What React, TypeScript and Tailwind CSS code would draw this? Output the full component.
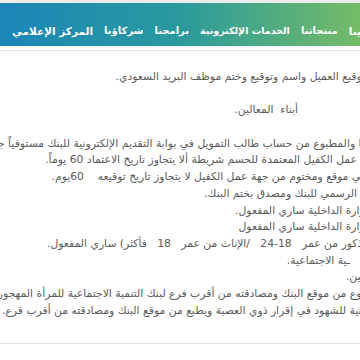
import React from "react";

type Nav = { t: string; c: string };

const navItems: Nav[] = [
  { t: "المركز الإعلامي", c: "text-[10.5px]" },
  { t: "شركاؤنا", c: "text-[10px]" },
  { t: "برامجنا", c: "text-[10px]" },
  { t: "الخدمات الإلكترونية", c: "text-[9.5px]" },
  { t: "منتجاتنا", c: "text-[10px]" },
  { t: "علينا", c: "text-[10.5px]" },
];

type Line = { t: string; c: string };

const lines: Line[] = [
  { t: "توقيع العميل واسم وتوقيع وختم موظف البريد السعودي.", c: "mr-[-5px]" },
  { t: "\u00a0", c: "" },
  { t: "أبناء  المعالين.", c: "mr-[62px]" },
  { t: "\u00a0", c: "" },
  { t: "ـا والمطبوع من حساب طالب التمويل في بوابة التقديم الإلكترونية للبنك مستوفياً جميع البيانات المطلوبة.", c: "mr-[-5px]" },
  { t: "عمل الكفيل المعتمدة للحسم شريطة ألا يتجاوز تاريخ الاعتماد 60 يوماً.", c: "mr-[3px]" },
  { t: "ـي موقع ومختوم من جهة عمل الكفيل لا يتجاوز تاريخ توقيعه    60يوم.", c: "mr-[-4px]" },
  { t: "الرسمي للبنك ومصدق بختم البنك.", c: "mr-[3px]" },
  { t: "وزارة الداخلية ساري المفعول.", c: "mr-[-10px]" },
  { t: "وزارة الداخلية ساري المفعول", c: "mr-[-10px]" },
  { t: "للذكور من عمر   18-24   /الإناث من عمر   18   فأكثر) ساري المفعول.", c: "mr-[-10px]" },
  { t: "ـية الاجتماعية.", c: "mr-[10px]" },
  { t: "ـين.", c: "mr-[-4px]" },
  { t: "ـوع من موقع البنك ومصادقته من أقرب فرع لبنك التنمية الاجتماعية للمرأة المهجورة أو المطلقة.", c: "mr-[-5px]" },
  { t: "ـنية للشهود في إقرار ذوي العصبة ويطبع من موقع البنك ومصادقته من أقرب فرع.", c: "mr-[-5px]" },
];

export default function App() {
  return (
    <div
      className="w-[360px] h-[360px] overflow-hidden bg-white"
      style={{ fontFamily: '"DejaVu Sans", sans-serif' }}
    >
      <div className="h-[3px] bg-[#ececec]" />
      <div className="h-[43px] bg-[linear-gradient(to_right,#1b86b9,#2a9a9d_50%,#74bb66)] overflow-hidden">
        <div className="flex items-center gap-[11px] pl-[12px] pt-[18px] whitespace-nowrap">
          {navItems.map((n) => (
            <span key={n.t} dir="rtl" className={`shrink-0 ${n.c} leading-[20px] font-bold text-white`}>
              {n.t}
            </span>
          ))}
        </div>
      </div>
      <div className="h-[4px]" />
      <div className="h-[1px] bg-[#e3e3e3]" />
      <div className="pt-[18px] h-[293px] border-b border-[#e1e1e1]">
        {lines.map((l, i) => (
          <div key={i} className={`h-[16.7px] flex justify-end items-center ${l.c}`}>
            <div
              dir="rtl"
              className="whitespace-pre text-[10.8px] leading-[16.7px] text-[#5c5c5c]"
            >
              {l.t}
            </div>
          </div>
        ))}
      </div>
    </div>
  );
}
